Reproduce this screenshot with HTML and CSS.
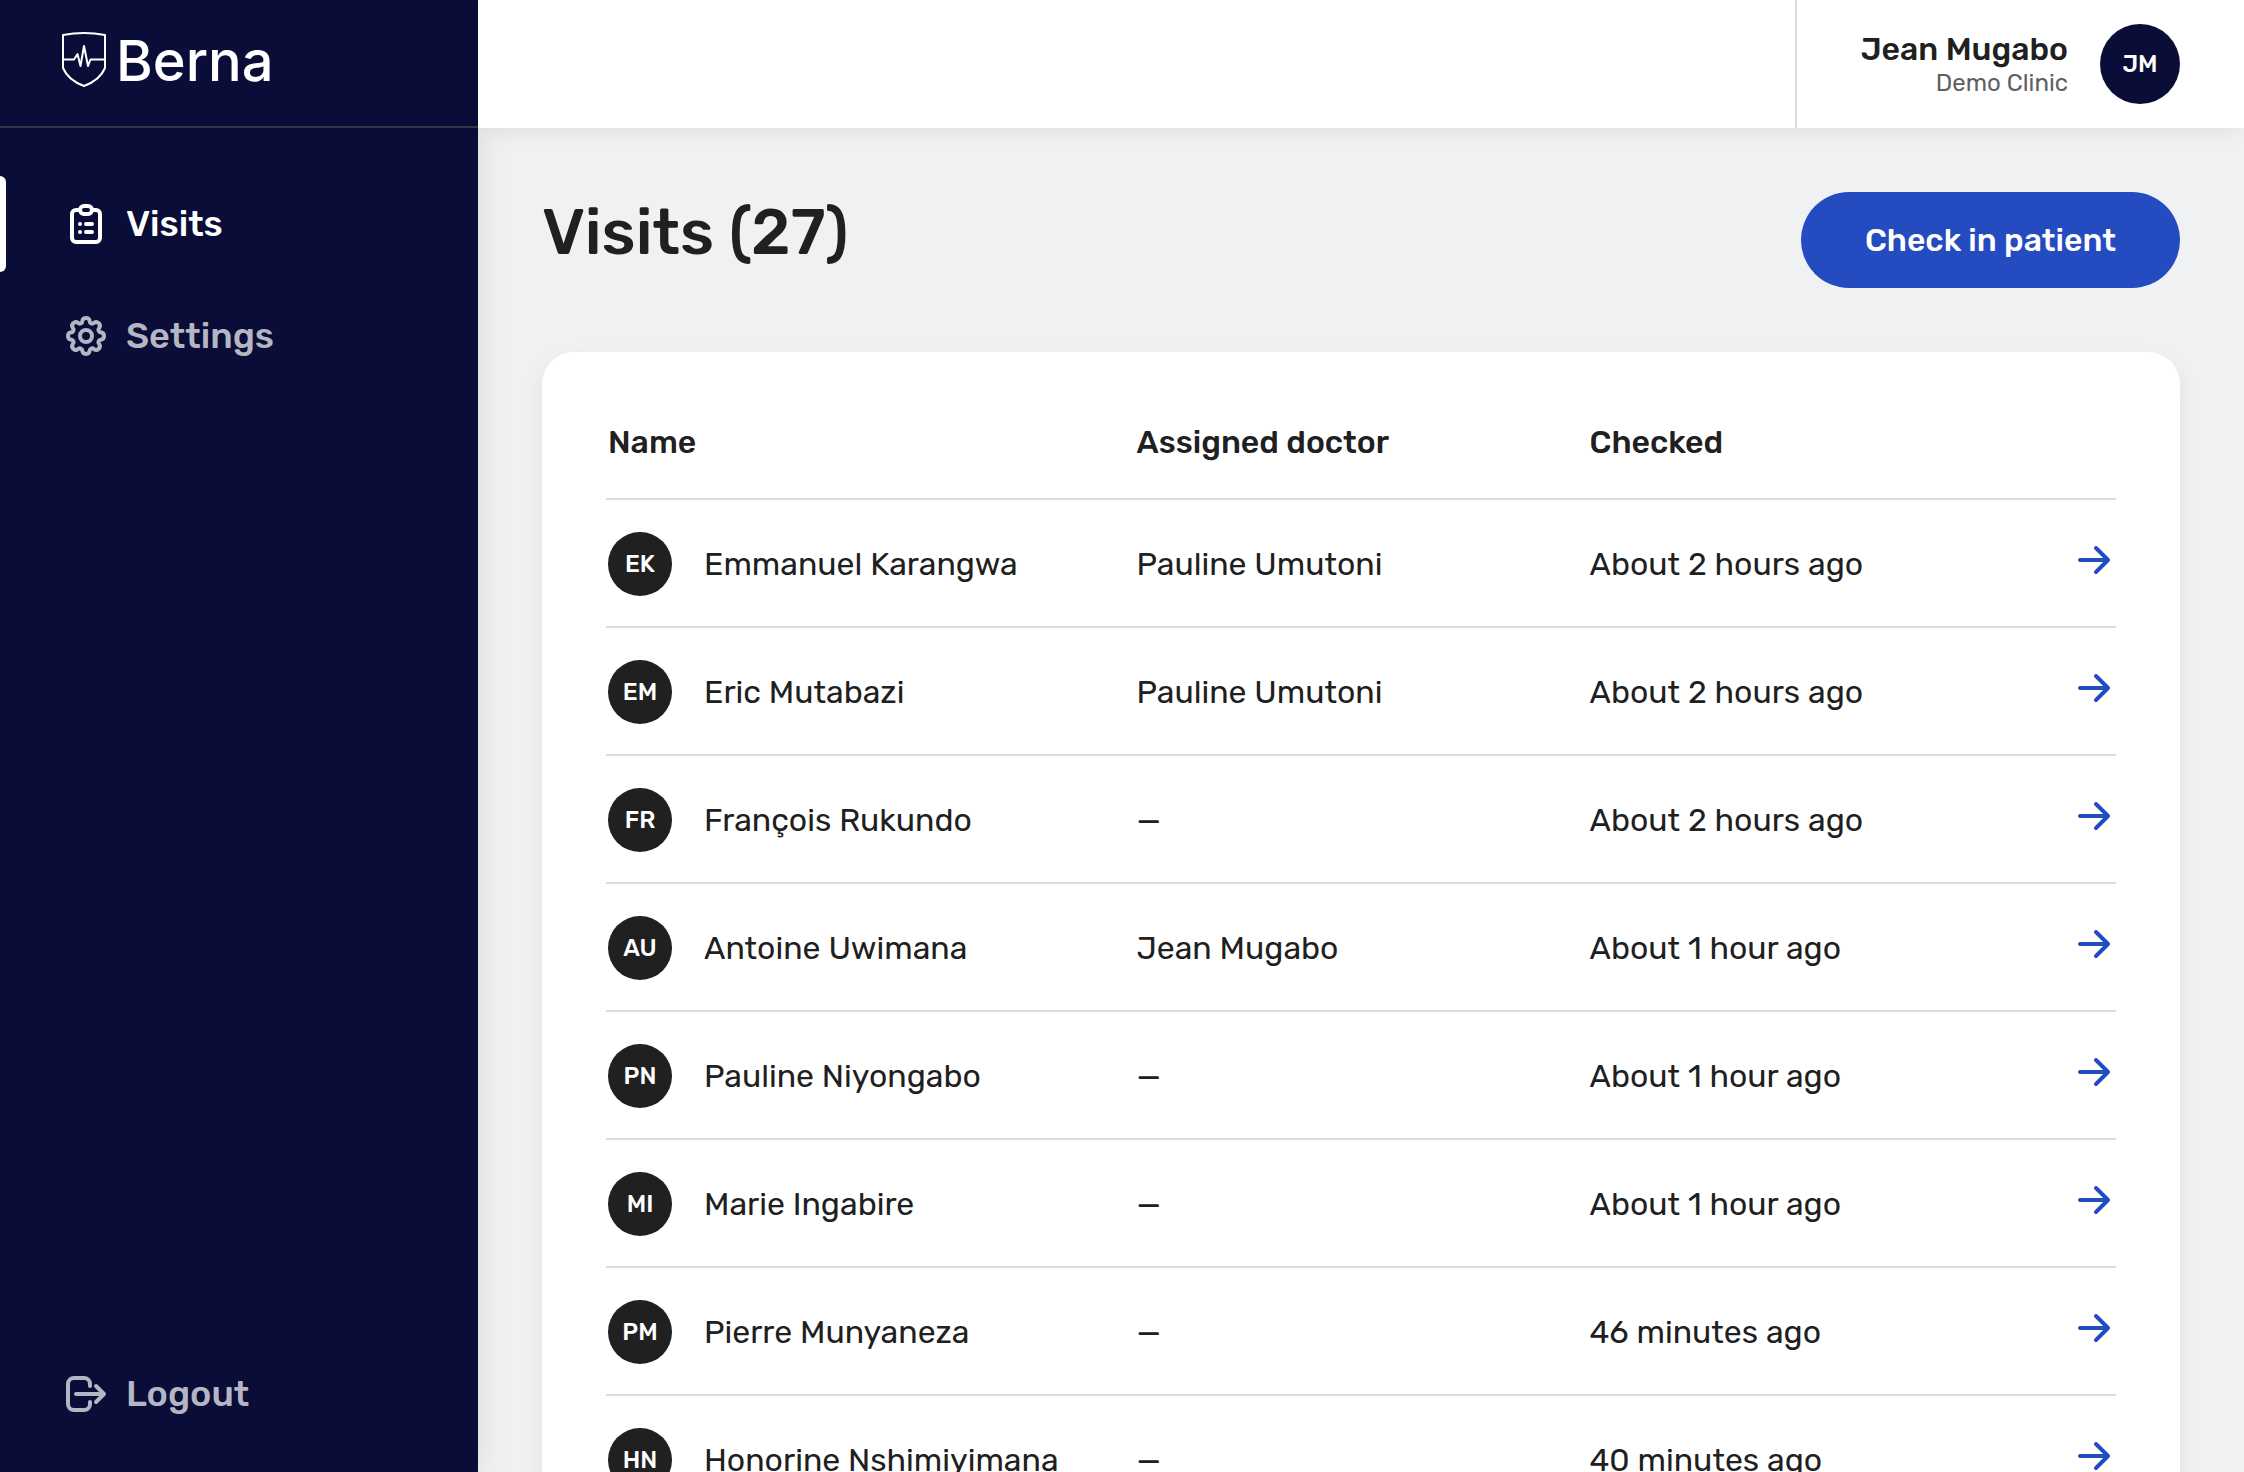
FILE: index.html
```html
<!DOCTYPE html>
<html lang="en">
<head>
<meta charset="utf-8">
<title>Visits – Berna</title>
<link rel="stylesheet" href="styles.css">
</head>
<body>
<svg class="sprite" aria-hidden="true">
  <symbol id="arrow" viewBox="0 0 36 36"><path d="M4 18H32M20 6L32 18L20 30"/></symbol>
</svg>
<div class="app">
  <aside class="sidebar">
    <a class="brand" href="#">
      <svg class="brand-mark" viewBox="0 0 44 56" aria-hidden="true">
        <path d="M1 3Q22 -1 43 3V36Q38 48 22 54Q6 48 1 36Z"/>
        <path d="M1 27.500H12L15.500 22L18.500 34L22 14L26 34L28.500 27.500H43"/>
      </svg>
      <span class="brand-name">Berna</span>
    </a>
    <nav class="nav">
      <a class="nav-item active" href="#">
        <svg class="icon" viewBox="0 0 48 48" aria-hidden="true"><path d="M18 10H14A4 4 0 0 0 10 14V38A4 4 0 0 0 14 42H34A4 4 0 0 0 38 38V14A4 4 0 0 0 34 10H30"/><rect x="18" y="6" width="12" height="8" rx="4"/><path d="M18 24H18.010M24 24H30M18 32H18.010M24 32H30"/></svg>
        Visits
      </a>
      <a class="nav-item" href="#">
        <svg class="icon" viewBox="-24 -24 48 48" aria-hidden="true"><path d="M-3.700 -14.800A3.740 3.740 0 0 1 3.700 -14.800A2.440 2.440 0 0 0 7.850 -13.080A3.740 3.740 0 0 1 13.080 -7.850A2.440 2.440 0 0 0 14.800 -3.700A3.740 3.740 0 0 1 14.800 3.700A2.440 2.440 0 0 0 13.080 7.850A3.740 3.740 0 0 1 7.850 13.080A2.440 2.440 0 0 0 3.700 14.800A3.740 3.740 0 0 1 -3.700 14.800A2.440 2.440 0 0 0 -7.850 13.080A3.740 3.740 0 0 1 -13.080 7.850A2.440 2.440 0 0 0 -14.800 3.700A3.740 3.740 0 0 1 -14.800 -3.700A2.440 2.440 0 0 0 -13.080 -7.850A3.740 3.740 0 0 1 -7.850 -13.080A2.440 2.440 0 0 0 -3.700 -14.800Z"/><circle r="6"/></svg>
        Settings
      </a>
      <a class="nav-item logout" href="#">
        <svg class="icon" viewBox="0 0 48 48" aria-hidden="true"><path d="M28 16V14A6 6 0 0 0 22 8H12A6 6 0 0 0 6 14V34A6 6 0 0 0 12 40H22A6 6 0 0 0 28 34V32M14 24H42M34 16L42 24L34 32"/></svg>
        Logout
      </a>
    </nav>
  </aside>
  <div class="page">
    <header class="topbar">
      <div class="user">
        <div class="user-text">
          <div class="user-name">Jean Mugabo</div>
          <div class="user-clinic">Demo Clinic</div>
        </div>
        <span class="avatar avatar-user">JM</span>
      </div>
    </header>
    <main class="content">
      <div class="heading">
        <h1>Visits (27)</h1>
        <button class="button" type="button">Check in patient</button>
      </div>
      <section class="card">
        <table class="visits">
          <colgroup><col class="col-name"><col class="col-doctor"><col class="col-checked"><col></colgroup>
          <thead>
            <tr><th scope="col">Name</th><th scope="col">Assigned doctor</th><th scope="col">Checked</th><th></th></tr>
          </thead>
          <tbody>
            <tr><td><div class="patient"><span class="avatar">EK</span>Emmanuel Karangwa</div></td><td>Pauline Umutoni</td><td>About 2 hours ago</td><td><a class="open" href="#" aria-label="Open visit"><svg><use href="#arrow"/></svg></a></td></tr>
            <tr><td><div class="patient"><span class="avatar">EM</span>Eric Mutabazi</div></td><td>Pauline Umutoni</td><td>About 2 hours ago</td><td><a class="open" href="#" aria-label="Open visit"><svg><use href="#arrow"/></svg></a></td></tr>
            <tr><td><div class="patient"><span class="avatar">FR</span>François Rukundo</div></td><td>—</td><td>About 2 hours ago</td><td><a class="open" href="#" aria-label="Open visit"><svg><use href="#arrow"/></svg></a></td></tr>
            <tr><td><div class="patient"><span class="avatar">AU</span>Antoine Uwimana</div></td><td>Jean Mugabo</td><td>About 1 hour ago</td><td><a class="open" href="#" aria-label="Open visit"><svg><use href="#arrow"/></svg></a></td></tr>
            <tr><td><div class="patient"><span class="avatar">PN</span>Pauline Niyongabo</div></td><td>—</td><td>About 1 hour ago</td><td><a class="open" href="#" aria-label="Open visit"><svg><use href="#arrow"/></svg></a></td></tr>
            <tr><td><div class="patient"><span class="avatar">MI</span>Marie Ingabire</div></td><td>—</td><td>About 1 hour ago</td><td><a class="open" href="#" aria-label="Open visit"><svg><use href="#arrow"/></svg></a></td></tr>
            <tr><td><div class="patient"><span class="avatar">PM</span>Pierre Munyaneza</div></td><td>—</td><td>46 minutes ago</td><td><a class="open" href="#" aria-label="Open visit"><svg><use href="#arrow"/></svg></a></td></tr>
            <tr><td><div class="patient"><span class="avatar">HN</span>Honorine Nshimiyimana</div></td><td>—</td><td>40 minutes ago</td><td><a class="open" href="#" aria-label="Open visit"><svg><use href="#arrow"/></svg></a></td></tr>
          </tbody>
        </table>
      </section>
    </main>
  </div>
</div>
</body>
</html>
```
FILE: styles.css
```css
* { box-sizing: border-box; }

body {
  margin: 0;
  font-family: Rubik, Inter, Roboto, sans-serif;
  font-size: 32px;
  line-height: 37px;
  color: #202020;
  background: #eff1f3;
}

a { color: inherit; text-decoration: none; }

.sprite { display: none; }

.app { display: flex; height: 100vh; overflow: hidden; }

/* Sidebar */
.sidebar {
  flex: 0 0 478px;
  display: flex;
  flex-direction: column;
  background: #0a0d37;
  color: #fff;
  box-shadow: 0 0 32px rgba(0, 0, 0, 0.1);
}

.brand {
  display: flex;
  gap: 10px;
  height: 128px;
  padding: 32px 62px 0;
  border-bottom: 2px solid #32344a;
}

.brand-mark {
  width: 44px;
  height: 56px;
  fill: none;
  stroke: #fff;
  stroke-width: 2;
  stroke-linejoin: round;
}

.brand-name {
  font-family: Inter, Arial, sans-serif;
  font-size: 56px;
  font-weight: 500;
  line-height: 58px;
}

.nav {
  flex: 1;
  display: flex;
  flex-direction: column;
  gap: 16px;
  padding: 48px 0 30px;
}

.nav-item {
  position: relative;
  display: flex;
  align-items: center;
  gap: 16px;
  height: 96px;
  padding: 0 62px;
  font-size: 36px;
  line-height: 38px;
  font-weight: 500;
  color: #b5b6c3;
}

.nav-item.active { color: #fff; }

.nav-item.active::before {
  content: "";
  position: absolute;
  inset: 0 auto 0 0;
  width: 6px;
  border-radius: 0 6px 6px 0;
  background: #fff;
}

.logout { margin-top: auto; }

.icon {
  width: 48px;
  height: 48px;
  fill: none;
  stroke: currentColor;
  stroke-width: 4;
  stroke-linecap: round;
  stroke-linejoin: round;
}

/* Top bar */
.page { flex: 1; min-width: 0; display: flex; flex-direction: column; }

.topbar {
  position: relative;
  flex: none;
  display: flex;
  justify-content: flex-end;
  height: 128px;
  background: #fff;
  box-shadow: 0 8px 24px -8px rgba(0, 0, 0, 0.1);
}

.user {
  display: flex;
  align-items: center;
  gap: 32px;
  padding: 0 64px;
  border-left: 2px solid #dcdcdc;
}

.user-text { text-align: right; }
.user-name { line-height: 38px; font-weight: 500; }
.user-clinic { font-size: 24px; line-height: 31px; color: #606060; }

.avatar {
  flex: none;
  display: grid;
  place-items: center;
  width: 64px;
  height: 64px;
  border-radius: 50%;
  background: #202020;
  color: #fff;
  font-size: 24px;
  line-height: 38px;
  font-weight: 500;
}

.avatar-user { width: 80px; height: 80px; background: #0a0d37; }

/* Content */
.content {
  flex: 1;
  min-height: 0;
  overflow-y: auto;
  scrollbar-width: none;
  padding: 64px;
}

.heading {
  display: flex;
  justify-content: space-between;
  align-items: flex-start;
  margin-bottom: 64px;
}

h1 { margin: 0; font-size: 64px; font-weight: 500; line-height: 80px; }

.button {
  height: 96px;
  padding: 0 64px;
  border: 0;
  border-radius: 48px;
  background: #244bc0;
  color: #fff;
  font: inherit;
  font-weight: 500;
}

.card {
  padding: 64px;
  border-radius: 32px;
  background: #fff;
  box-shadow: 0 8px 24px -4px rgba(0, 0, 0, 0.1);
}

.visits { width: 100%; table-layout: fixed; border-collapse: separate; border-spacing: 0; }
.col-name { width: 35%; }
.col-doctor { width: 30%; }
.col-checked { width: 26%; }

th, td { padding: 2px 2px 0; border-bottom: 2px solid #dcdcdc; text-align: left; white-space: nowrap; }
th { height: 84px; padding-bottom: 32px; font-weight: 500; }
td { height: 128px; }
td:last-child { padding: 0 4px 6px; }

.patient { display: flex; align-items: center; gap: 32px; }

.open { display: block; width: 36px; margin-left: auto; }
.open svg {
  display: block;
  width: 36px;
  height: 36px;
  fill: none;
  stroke: #244bc0;
  stroke-width: 4;
  stroke-linecap: round;
  stroke-linejoin: round;
}
```
